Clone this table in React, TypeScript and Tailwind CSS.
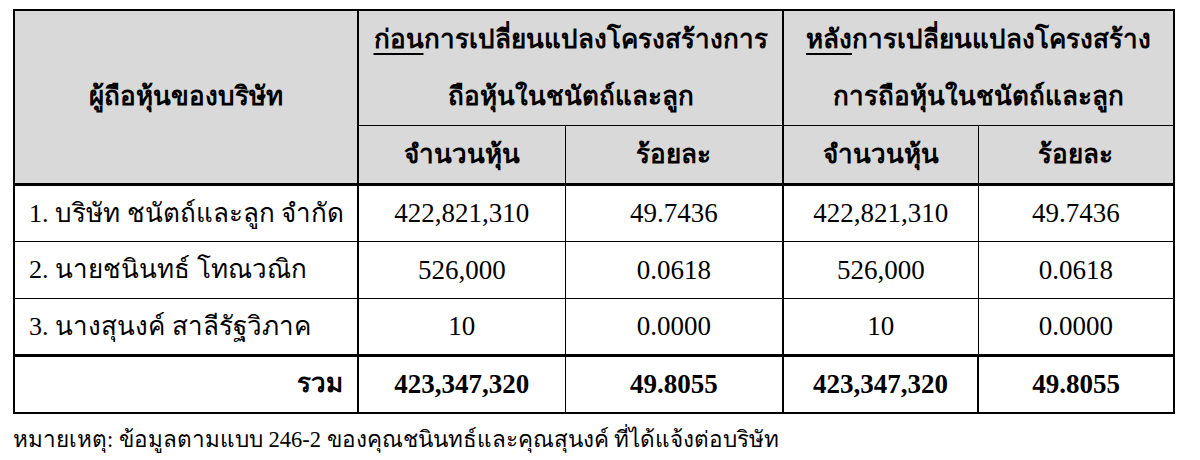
import React from "react";

/**
 * Shareholding table - before / after the restructure
 */

interface Row {
  name: string;
  beforeShares: string;
  beforePct: string;
  afterShares: string;
  afterPct: string;
}

const ROWS: Row[] = [
  {
    name: "1. บริษัท ชนัตถ์และลูก จำกัด",
    beforeShares: "422,821,310",
    beforePct: "49.7436",
    afterShares: "422,821,310",
    afterPct: "49.7436",
  },
  {
    name: "2. นายชนินทธ์ โทณวณิก",
    beforeShares: "526,000",
    beforePct: "0.0618",
    afterShares: "526,000",
    afterPct: "0.0618",
  },
  {
    name: "3. นางสุนงค์ สาลีรัฐวิภาค",
    beforeShares: "10",
    beforePct: "0.0000",
    afterShares: "10",
    afterPct: "0.0000",
  },
];

export default function App() {
  return (
    <div className="w-[1200px] h-[460px] bg-white text-black font-[family-name:Liberation_Serif,serif] text-[26px] leading-none">
      <div className="pl-[13px] pt-[9px]">
        <table className="border-collapse table-fixed w-[1160px]">
          <colgroup>
            <col className="w-[344px]" />
            <col className="w-[207px]" />
            <col className="w-[218px]" />
            <col className="w-[195px]" />
            <col className="w-[196px]" />
          </colgroup>
          <thead className="bg-[#d9d9d9] font-bold">
            <tr className="h-[114px]">
              <th
                rowSpan={2}
                className="border-2 border-black border-b-[3px] font-bold text-center align-middle"
              >
                ผู้ถือหุ้นของบริษัท
              </th>
              <th
                colSpan={2}
                className="border-2 border-black border-b font-bold text-center align-middle leading-[57px]"
              >
                <span className="underline decoration-2 underline-offset-[5px]">ก่อน</span>
                การเปลี่ยนแปลงโครงสร้างการ
                <br />
                ถือหุ้นในชนัตถ์และลูก
              </th>
              <th
                colSpan={2}
                className="border-2 border-black border-b font-bold text-center align-middle leading-[57px]"
              >
                <span className="underline decoration-2 underline-offset-[5px]">หลัง</span>
                การเปลี่ยนแปลงโครงสร้าง
                <br />
                การถือหุ้นในชนัตถ์และลูก
              </th>
            </tr>
            <tr className="h-[59px]">
              <th className="border border-black border-l-2 border-b-[3px] font-bold">จำนวนหุ้น</th>
              <th className="border border-black border-b-[3px] font-bold">ร้อยละ</th>
              <th className="border border-black border-l-2 border-b-[3px] font-bold">จำนวนหุ้น</th>
              <th className="border border-black border-r-2 border-b-[3px] font-bold">ร้อยละ</th>
            </tr>
          </thead>
          <tbody className="text-[27px]">
            {ROWS.map((r) => (
              <tr key={r.name} className="h-[57px]">
                <td className="border-2 border-black border-y px-[14px] text-left text-[26px] whitespace-nowrap">
                  {r.name}
                </td>
                <td className="border border-black border-l-2 text-center">{r.beforeShares}</td>
                <td className="border border-black text-center">{r.beforePct}</td>
                <td className="border border-black border-l-2 text-center">{r.afterShares}</td>
                <td className="border border-black border-r-2 text-center">{r.afterPct}</td>
              </tr>
            ))}
            <tr className="h-[57px] font-bold">
              <td className="border-2 border-black border-t-[3px] px-[14px] text-right text-[26px]">รวม</td>
              <td className="border-2 border-black border-t-[3px] border-r text-center">423,347,320</td>
              <td className="border-2 border-black border-t-[3px] border-x text-center">49.8055</td>
              <td className="border-2 border-black border-t-[3px] border-r text-center">423,347,320</td>
              <td className="border-2 border-black border-t-[3px] text-center">49.8055</td>
            </tr>
          </tbody>
        </table>
        <p className="mt-[15px] text-[22.5px]">
          หมายเหตุ: ข้อมูลตามแบบ 246-2 ของคุณชนินทธ์และคุณสุนงค์ ที่ได้แจ้งต่อบริษัท
        </p>
      </div>
    </div>
  );
}
